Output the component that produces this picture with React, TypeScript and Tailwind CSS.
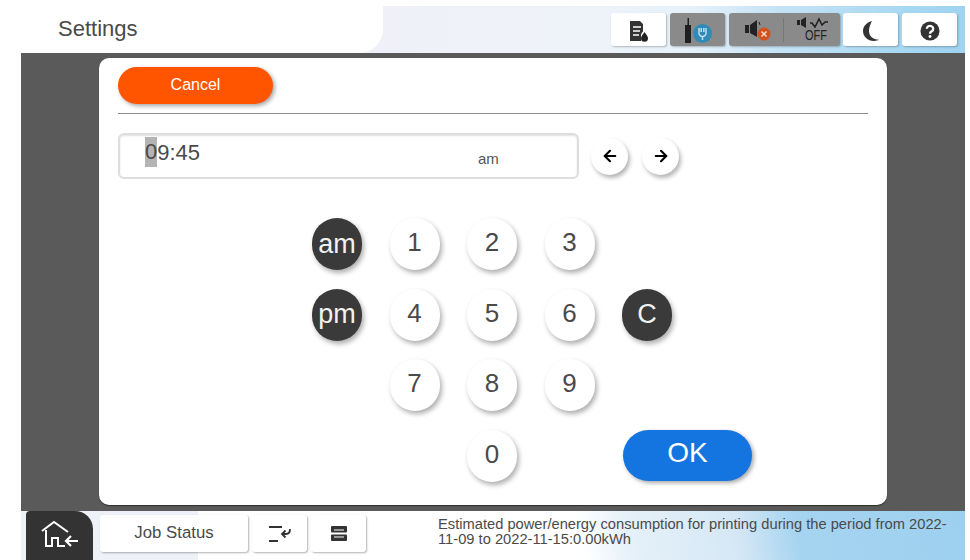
import { ArrowLeft, ArrowRight } from "lucide-react";
import type { ReactNode } from "react";

const font = { fontFamily: '"Liberation Sans", Arial, sans-serif' };

function Key({ label, dark }: { label?: string; dark?: boolean }) {
  if (!label) return <div />;
  return (
    <button
      className={`flex h-[52px] w-[50px] items-center justify-center rounded-full shadow-[2px_3px_5px_rgba(0,0,0,0.32)] ${
        dark ? "bg-[#3a3a3a] text-[27px] text-[#f2f2f2]" : "bg-white pb-[3px] text-[26px] text-[#4a4a4a]"
      }`}
    >
      {label}
    </button>
  );
}

function TopButton({ children, gray }: { children: ReactNode; gray?: boolean }) {
  return (
    <div
      className={`flex h-[33px] w-[55px] items-center justify-center rounded-[3px] pt-[2px] shadow-[1px_1px_2px_rgba(0,0,0,0.25)] ${
        gray ? "bg-[#8a8a8a]" : "bg-white"
      }`}
    >
      {children}
    </div>
  );
}

function BottomButton({ children, className }: { children: ReactNode; className: string }) {
  return (
    <div className={`flex h-[37px] items-center justify-center rounded-[3px] bg-white shadow-[1px_1px_2px_rgba(0,0,0,0.3)] ${className}`}>
      {children}
    </div>
  );
}

export default function App() {
  const keys = ["am", "1", "2", "3", "", "pm", "4", "5", "6", "C", "", "7", "8", "9", "", "", "", "0", ""];

  return (
    <div style={font} className="flex h-[560px] w-[970px] flex-col bg-white pl-[21px] pr-[5px] pt-[6px]">
      {/* Header */}
      <div className="flex h-[47px] items-start justify-between bg-[linear-gradient(90deg,#f0f1f8_362px,#eef3f9_580px,#e5f1fa_670px,#c8e4f6_750px,#a8d8f2_880px,#9fd3f0_100%)]">
        <div className="flex h-full w-[362px] items-center rounded-br-[24px] bg-white pb-[2px] pl-[37px] text-[22px] text-[#4a4a4a]">Settings</div>
        <div className="flex items-center gap-[4px] pr-[8px] pt-[7px]">
          <TopButton>
            <svg width="20" height="22" viewBox="0 0 20 22">
              <path d="M1 1h10l3 3v7.500a6 6 0 0 0-2 3.500v6H1z" fill="#333" />
              <path d="M4 7h8M4 11h7M4 15h6" stroke="#fff" strokeWidth="1.500" />
              <path d="M15.500 12c2 3 3.500 4.600 3.500 6.200a3.500 3.500 0 0 1-7 0c0-1.600 1.500-3.200 3.500-6.200z" fill="#222" />
            </svg>
          </TopButton>
          <TopButton gray>
            <svg width="30" height="26" viewBox="0 0 30 26">
              <path d="M2 7h2.500V0H6v7h2v18H2z" fill="#1f1f1f" />
              <circle cx="19.500" cy="15.500" r="9.500" fill="#2f8ab8" />
              <path d="M16 10v5a3.500 3.500 0 0 0 7 0v-5M18.200 10v4M20.800 10v4M19.500 18.500v3.500" stroke="#bfe0ee" strokeWidth="1.500" fill="none" />
            </svg>
          </TopButton>
          <div className="flex h-[33px] w-[111px] items-center rounded-[3px] bg-[#8a8a8a] shadow-[1px_1px_2px_rgba(0,0,0,0.25)]">
            <div className="flex h-[24px] w-[55px] items-center justify-center border-r border-[#777] pl-[4px] pt-[2px]">
              <svg width="28" height="24" viewBox="0 0 28 24">
                <path d="M1 6h4v8H1zM6 6l7-5v17l-7-4z" fill="#222" />
                <path d="M15 3l1 3" stroke="#222" strokeWidth="1" />
                <circle cx="20" cy="15" r="6.500" fill="#d2521c" />
                <path d="M17.500 12.500l5 5M22.500 12.500l-5 5" stroke="#f6ddd0" strokeWidth="1.500" />
              </svg>
            </div>
            <div className="flex h-full flex-1 flex-col items-center justify-start pl-[2px] pt-[4px]">
              <svg width="34" height="12" viewBox="0 0 34 12">
                <path d="M1 3h3v5H1zM5 3l5-3v11L5 8z" fill="#222" />
                <path d="M14 6h2l3 4 4-8 3 6 3-3h3" stroke="#222" strokeWidth="1.600" fill="none" />
              </svg>
              <span className="ml-[6px] scale-x-[0.78] text-[14px] leading-[12px] text-[#222]">OFF</span>
            </div>
          </div>
          <div className="-ml-[1px]">
            <TopButton>
              <svg width="18" height="22" viewBox="0 0 18 22">
                <path d="M10 1C4 2.500 1 6.500 1 11c0 5.500 4.500 10 11 10 2 0 4-.5 5-1.200-6-.3-10-3.800-10-8.800 0-4 1.500-7 3-10z" fill="#333" />
              </svg>
            </TopButton>
          </div>
          <TopButton>
            <svg width="20" height="20" viewBox="0 0 22 22">
              <circle cx="11" cy="11" r="10.500" fill="#333" />
              <path d="M7.500 8.500a3.500 3.200 0 1 1 5.500 2.700c-1.300.9-2 1.300-2 2.800" stroke="#fff" strokeWidth="2.500" fill="none" />
              <circle cx="11" cy="17" r="1.600" fill="#fff" />
            </svg>
          </TopButton>
        </div>
      </div>

      {/* Modal area */}
      <main className="flex h-[458px] justify-center bg-[#5a5a5a] pt-[5px]">
        <div className="flex h-[447px] w-[788px] flex-col rounded-[10px] bg-white px-[19px] pt-[9px] shadow-[0_1px_1px_rgba(0,0,0,0.5)]">
          <button className="h-[37px] w-[155px] rounded-full bg-[#ff5500] pb-[2px] text-[16px] text-white shadow-[2px_2px_4px_rgba(0,0,0,0.35)]">Cancel</button>
          <div className="mt-[9px] h-px bg-[#8e8e8e]" />
          <div className="mt-[19px] flex items-center">
            <div className="relative flex h-[46px] w-[461px] items-center rounded-[6px] border-2 border-[#dedede] pl-[25px] text-[22px] text-[#4a4a4a] shadow-[inset_0_1px_2px_rgba(0,0,0,0.12)]">
              <span className="-mt-[8px] bg-[#b4b4b4] leading-[30px]">0</span>
              <span className="-mt-[8px]">9:45</span>
              <span className="absolute left-[358px] top-[13px] text-[15px] text-[#555]">am</span>
            </div>
            <button className="ml-[12px] flex h-[37px] w-[37px] items-center justify-center rounded-full bg-white text-black shadow-[2px_3px_4px_rgba(0,0,0,0.3)]">
              <ArrowLeft size={18} strokeWidth={2.8} />
            </button>
            <button className="ml-[14px] flex h-[37px] w-[37px] items-center justify-center rounded-full bg-white text-black shadow-[2px_3px_4px_rgba(0,0,0,0.3)]">
              <ArrowRight size={18} strokeWidth={2.8} />
            </button>
          </div>

          <div className="relative ml-[194px] mt-[39px] grid w-[360px] grid-cols-[repeat(5,50px)] gap-x-[27.5px] gap-y-[18.5px]">
            {keys.map((k, i) => (
              <Key key={i} label={k} dark={k === "am" || k === "pm" || k === "C"} />
            ))}
            <button className="absolute left-[311px] top-[212px] h-[51px] w-[129px] rounded-full bg-[#1474e0] pb-[5px] text-[28px] text-white shadow-[2px_2px_4px_rgba(0,0,0,0.35)]">OK</button>
          </div>
        </div>
      </main>

      {/* Footer */}
      <footer className="flex h-[49px] items-start bg-[linear-gradient(90deg,#eef1f8_177px,transparent_177px),linear-gradient(80deg,#ffffff_556px,#e6f1f9_600px,#d5e7f5_710px,#a5d4f0_770px,#9dd0ef_100%)]">
        <div className="ml-[5px] flex h-full w-[67px] items-center justify-center rounded-tl-[4px] rounded-tr-[18px] bg-[#333]">
          <svg width="40" height="30" viewBox="0 0 40 30" fill="none" stroke="#fff" strokeWidth="2">
            <path d="M2 10L14 1l14 10" />
            <path d="M6 9v16h6v-8h6v8h7" />
            <path d="M38 20H26M31 15l-5 5 5 5" strokeWidth="2.200" />
          </svg>
        </div>
        <div className="ml-[7px] flex gap-[4px] pt-[4px]">
          <BottomButton className="w-[148px] pb-[2px] text-[16.8px] text-[#4a4a4a]">Job Status</BottomButton>
          <BottomButton className="w-[55px]">
            <svg width="24" height="18" viewBox="0 0 24 18" fill="none" stroke="#333" strokeWidth="2">
              <path d="M1 2h13M1 16h9" />
              <path d="M22 4c0 3-1.500 5-4 5h-4M17.500 5.500L14 9l3.500 3.500" strokeWidth="1.800" />
            </svg>
          </BottomButton>
          <BottomButton className="w-[55px]">
            <svg width="18" height="15" viewBox="0 0 18 15">
              <rect x="1" y="0" width="16" height="6.500" rx="1" fill="#333" />
              <rect x="1" y="8.500" width="16" height="6.500" rx="1" fill="#333" />
              <path d="M4 4h10M4 11h10" stroke="#fff" strokeWidth="1.200" />
            </svg>
          </BottomButton>
        </div>
        <p className="ml-[72px] w-[510px] pt-[6px] text-[14.7px] leading-[15px] text-[#4a4a4a]">
          Estimated power/energy consumption for printing during the period from 2022-11-09 to 2022-11-15:0.00kWh
        </p>
      </footer>
    </div>
  );
}
